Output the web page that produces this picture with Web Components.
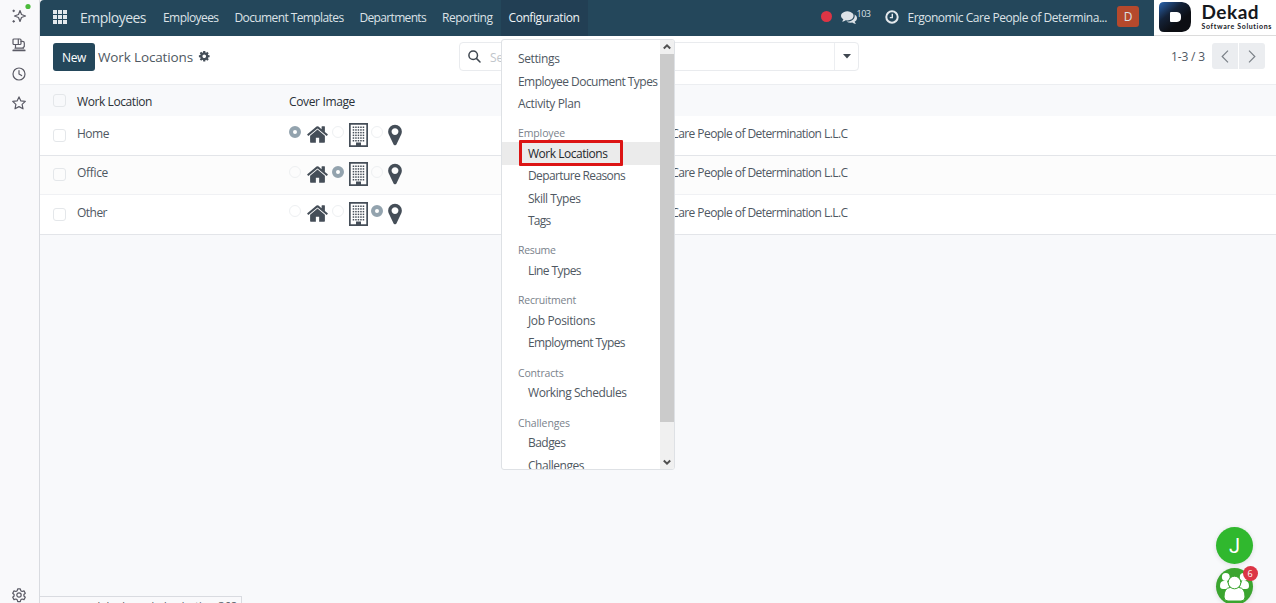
<!DOCTYPE html>
<html lang="en">
<head>
<meta charset="utf-8">
<title>Work Locations</title>
<style>
  html, body {
    margin: 0;
    height: 100%;
    overflow: hidden;
  }

  body {
    font-family: "Open Sans", "Noto Sans", sans-serif;
    font-size: 12px;
    color: #4f5862;
    background: #f8f9fb;
  }
</style>
</head>
<body>
<work-locations-page></work-locations-page>

<script>
const ICONS = {
  home: '<path d="M1472 992v480q0 26-19 45t-45 19h-384v-384h-256v384h-384q-26 0-45-19t-19-45v-480q0-1 .5-3t.5-3l575-474 575 474q1 2 1 6zm223-69l-62 74q-8 9-21 11h-3q-13 0-21-7l-692-577-692 577q-12 8-24 7-13-2-21-11l-62-74q-8-10-7-23.5t11-21.5l719-599q32-26 76-26t76 26l244 204v-195q0-14 9-23t23-9h192q14 0 23 9t9 23v408l219 182q10 8 11 21.5t-7 23.5z"/>',
  marker: '<path d="M1152 640q0-106-75-181t-181-75-181 75-75 181 75 181 181 75 181-75 75-181zm256 0q0 109-33 179l-364 774q-16 33-47.5 52t-67.5 19-67.5-19-46.5-52l-365-774q-33-70-33-179 0-212 150-362t362-150 362 150 150 362z"/>',
  cog: '<path d="M1152 896q0-106-75-181t-181-75-181 75-75 181 75 181 181 75 181-75 75-181zm512-109v222q0 12-8 23t-20 13l-185 28q-19 54-39 91 35 50 107 138 10 12 10 25t-9 23q-27 37-99 108t-94 71q-12 0-26-9l-138-108q-44 23-91 38-16 136-29 186-7 28-36 28h-222q-14 0-24.5-8.5t-11.5-21.5l-28-184q-49-16-90-37l-141 107q-10 9-25 9-14 0-25-11-126-114-165-168-7-10-7-23 0-12 8-23 15-21 51-66.5t54-70.5q-27-50-41-99l-183-27q-13-2-21-12.5t-8-23.5v-222q0-12 8-23t19-13l186-28q14-46 39-92-40-57-107-138-10-12-10-24 0-10 9-23 26-36 98.5-107.5t94.5-71.5q13 0 26 10l138 107q44-23 91-38 16-136 29-186 7-28 36-28h222q14 0 24.5 8.5t11.5 21.5l28 184q49 16 90 37l142-107q9-9 24-9 13 0 25 10 129 119 165 170 7 8 7 22 0 12-8 23-15 21-51 66.5t-54 70.5q26 50 41 98l183 28q13 2 21 12.5t8 23.5z"/>',
  comments: '<path d="M1408 768q0 139-94 257t-256.5 186.5-353.5 68.5q-86 0-176-16-124 88-278 128-36 9-86 16h-3q-11 0-20.5-8t-11.5-21q-1-3-1-6.5t.5-6.5 2-6l2.5-5 3.5-5.5 4-5 4.5-5 4-4.5q5-6 23-25t26-29.5 22.5-29 25-38.5 20.5-44q-124-72-195-177t-71-224q0-139 94-257t256.5-186.5 353.5-68.5 353.5 68.5 256.5 186.5 94 257zm384 256q0 120-71 224.5t-195 176.5q10 24 20.5 44t25 38.5 22.5 29 26 29.5 23 25q1 1 4 4.5t4.5 5 4 5 3.5 5.5l2.5 5 2 6 .5 6.5-1 6.5q-3 14-13 22t-22 7q-50-7-86-16-154-40-278-128-90 16-176 16-271 0-472-132 58 4 88 4 161 0 309-45t264-129q125-92 192-212t67-254q0-77-23-152 129 71 204 178t75 230z"/>'
}

// Single line of text, spaced out to the given width
class TextLabel extends HTMLElement {
  constructor () {
    super()
    this.shadow = this.attachShadow({ mode: 'open' })
  }

  connectedCallback () {
    this.shadow.innerHTML =
      /* html */`
      <style>
        :host{
          display: inline-block;
          white-space: nowrap;
        }
      </style>
      <slot></slot>
    `
    const width = Number(this.getAttribute('w'))
    if (width) {
      const natural = this.getBoundingClientRect().width
      this.style.letterSpacing = `${(width - natural) / this.textContent.length}px`
    }
  }
}

class FaIcon extends HTMLElement {
  constructor () {
    super()
    this.shadow = this.attachShadow({ mode: 'open' })
  }

  connectedCallback () {
    const size = this.getAttribute('size')
    this.shadow.innerHTML =
      /* html */`
      <style>
        :host{
          display: block;
          flex: none;
        }

        svg{
          display: block;
          fill: currentColor;
        }
      </style>
      <svg width="${size}" height="${size}" viewBox="0 0 1792 1792">${ICONS[this.getAttribute('name')]}</svg>
    `
  }
}

class SideRail extends HTMLElement {
  constructor () {
    super()
    this.shadow = this.attachShadow({ mode: 'open' })
  }

  connectedCallback () {
    this.shadow.innerHTML =
      /* html */`
      <style>
        :host{
          display: flex;
          flex-direction: column;
          align-items: center;
          box-sizing: border-box;
          width: 40px;
          padding: 8px 2px 0 0;
          gap: 13.100px;
          background: #f9f9fb;
          border-right: 1px solid #d9dbe0;
        }

        svg{
          display: block;
          flex: none;
          overflow: visible;
          fill: none;
          stroke: #5b5b66;
          stroke-width: 1.2;
          stroke-linejoin: round;
          stroke-linecap: round;
        }

        .settings{
          margin-top: auto;
        }
      </style>

      <svg width="16" height="16" viewBox="0 0 16 16">
        <path d="M9 2.500L10.500 6.500L14.500 8L10.500 9.500L9 13.500L7.500 9.500L3.500 8L7.500 6.500Z"/>
        <path d="M2.700 2v1.600M1.900 2.800h1.600M2.700 12.500v1.600M1.900 13.300h1.600"/>
        <circle cx="17" cy="-1.500" r="2.600" fill="#4cbb3c" stroke="none"/>
      </svg>
      <svg width="16" height="16" viewBox="0 0 16 16">
        <rect x="2" y="2" width="8" height="5.500" rx="1"/>
        <path d="M7.300 2.400v4.700M4.500 7.800v3.200M4 11.200h8.500M10 4.300h1.500q1.800 0 1.800 1.800v3.400l-1.500 1.500"/>
        <path d="M2.300 13.400h11.400" stroke-width="1.800"/>
      </svg>
      <svg width="16" height="16" viewBox="0 0 16 16">
        <circle cx="8" cy="8" r="6"/>
        <path d="M8 4.500V8l2.600 1.600"/>
      </svg>
      <svg width="16" height="16" viewBox="0 0 16 16">
        <path d="M8 1.900L9.900 5.900L14.300 6.400L11.100 9.400L12 13.800L8 11.600L4 13.800L4.900 9.400L1.700 6.400L6.100 5.900Z"/>
      </svg>
      <svg class="settings" width="16" height="16" viewBox="0 0 16 16">
        <circle cx="8" cy="8" r="2.200"/>
        <path d="M6.700 1.800h2.600l.5 1.900 1.300.8 1.900-.6 1.300 2.300-1.400 1.300v1.500l1.400 1.300-1.300 2.300-1.900-.6-1.300.8-.5 1.900H6.700l-.5-1.900-1.300-.8-1.900.6-1.300-2.300L3.100 9V7.500L1.700 6.200 3 3.900l1.900.6 1.300-.8z"/>
      </svg>
    `
  }
}

class NavBar extends HTMLElement {
  constructor () {
    super()
    this.shadow = this.attachShadow({ mode: 'open' })
  }

  connectedCallback () {
    this.shadow.innerHTML =
      /* html */`
      <style>
        :host{
          display: flex;
          height: 36px;
          color: #dce2e7;
        }

        .bar{
          flex: 1;
          display: flex;
          align-items: center;
          background: #24475b;
          border-radius: 4px 0 0 0;
          padding: 0 15px 2px 13px;
          box-sizing: border-box;
        }

        .apps{
          display: grid;
          grid-template-columns: repeat(3, 4px);
          gap: 1px;
          margin: -1px 13px 0 0;
        }

        .apps i{
          height: 4px;
          background: #e3e8ec;
        }

        .brand{
          font-size: 14px;
          margin-right: 17px;
        }

        nav{
          display: flex;
          align-self: stretch;
          margin-bottom: -2px;
        }

        nav a{
          display: flex;
          align-items: center;
          padding: 0 8px 2px;
        }

        nav a:first-child{
          padding-left: 0;
        }

        nav a.active{
          background: #223f54;
          color: #f1f4f6;
        }

        .systray{
          display: flex;
          align-items: center;
          margin-left: auto;
        }

        .dot{
          width: 11px;
          height: 11px;
          border-radius: 50%;
          background: #dc3545;
          margin: -1px 9px 0 0;
        }

        .count{
          font-size: 9px;
          margin: -8px 14px 0 0;
        }

        .clock{
          display: block;
          margin: -1px 9px 0 0;
        }

        .avatar{
          display: grid;
          place-items: center;
          width: 22px;
          height: 21px;
          margin: 0 0 1px 10px;
          border-radius: 3px;
          background: #b5492c;
        }

        .logo{
          display: flex;
          align-items: center;
          box-sizing: border-box;
          width: 122px;
          padding: 0 0 1px 4.500px;
          background: #fff;
          border-bottom: 1px solid #dcdcdc;
          color: #15181d;
          font-family: Lato, sans-serif;
          font-weight: 700;
        }

        .words{
          display: flex;
          flex-direction: column;
          margin: -1px 0 0 11px;
        }

        .name{
          font-size: 19px;
          line-height: 19px;
        }

        .tag{
          font-size: 7px;
          line-height: 10px;
        }
      </style>

      <div class="bar">
        <div class="apps"><i></i><i></i><i></i><i></i><i></i><i></i><i></i><i></i><i></i></div>
        <text-label class="brand" w="66">Employees</text-label>
        <nav>
          <a><text-label w="55.500">Employees</text-label></a>
          <a><text-label w="109">Document Templates</text-label></a>
          <a><text-label w="66.500">Departments</text-label></a>
          <a><text-label w="50.500">Reporting</text-label></a>
          <a class="active"><text-label w="71">Configuration</text-label></a>
        </nav>
        <div class="systray">
          <div class="dot"></div>
          <fa-icon name="comments" size="16"></fa-icon>
          <text-label class="count" w="14">103</text-label>
          <svg class="clock" width="14" height="14" viewBox="0 0 14 14" fill="none" stroke="#e3e8ec">
            <circle cx="7" cy="7" r="5.700" stroke-width="2"/>
            <path d="M7.300 3.800v3.800H4.800" stroke-width="1.400"/>
          </svg>
          <text-label w="199.500">Ergonomic Care People of Determina...</text-label>
          <div class="avatar">D</div>
        </div>
      </div>
      <div class="logo">
        <svg width="32" height="30" viewBox="0 0 32 30">
          <defs>
            <linearGradient id="g" x1="0" y1="0" x2=".6" y2=".7">
              <stop offset="0" stop-color="#2a65b0"/>
              <stop offset=".55" stop-color="#142238"/>
              <stop offset="1" stop-color="#0c0e13"/>
            </linearGradient>
          </defs>
          <path fill="url(#g)" d="M5 0H23Q32 1 32 10V20Q32 29 23 30H5Q0 30 0 25V5Q0 0 5 0Z"/>
          <path fill="#fff" d="M12 10H18Q22 10.500 22 14V16Q22 19.500 18 20H12Q11 20 11 19V11Q11 10 12 10Z"/>
        </svg>
        <div class="words">
          <text-label class="name" w="61.500">Dekad</text-label>
          <text-label class="tag" w="70.500">Software Solutions</text-label>
        </div>
      </div>
    `
  }
}

class ControlPanel extends HTMLElement {
  constructor () {
    super()
    this.shadow = this.attachShadow({ mode: 'open' })
  }

  connectedCallback () {
    this.shadow.innerHTML =
      /* html */`
      <style>
        :host{
          display: grid;
          grid-template-columns: 419px 400px 1fr;
          align-items: center;
          box-sizing: border-box;
          height: 49px;
          padding: 0 11px 7px 0;
          background: #fff;
          border-bottom: 1px solid #eceef1;
        }

        .left{
          display: flex;
          align-items: center;
          padding-left: 13px;
        }

        .new{
          display: grid;
          place-items: center;
          box-sizing: border-box;
          width: 42px;
          height: 28px;
          padding-top: 1px;
          margin-right: 3px;
          border-radius: 3px;
          background: #24475b;
          color: #fff;
        }

        .title{
          font-size: 13.500px;
          margin-right: 5px;
        }

        .left fa-icon{
          color: #454e58;
        }

        .search{
          display: flex;
          align-items: center;
          box-sizing: border-box;
          height: 29px;
          border: 1px solid #e9ebee;
          border-radius: 4px;
          padding-left: 8px;
          color: #c0c5cb;
        }

        .search text-label{
          margin: 2px 0 0 9px;
        }

        .toggle{
          display: grid;
          place-items: center;
          align-self: stretch;
          width: 23px;
          margin-left: auto;
          border-left: 1px solid #eceef1;
        }

        .pager{
          display: flex;
          align-items: center;
          justify-content: flex-end;
          gap: 1px;
          margin-top: -1px;
        }

        .pager text-label{
          margin-right: 6px;
        }

        .pager div{
          display: grid;
          place-items: center;
          width: 26px;
          height: 26px;
          background: #ebedf0;
        }

        .pager svg, .toggle svg, .search svg{
          display: block;
        }

        .pager .prev{
          border-radius: 3px 0 0 3px;
        }

        .pager .next{
          border-radius: 0 3px 3px 0;
        }
      </style>

      <div class="left">
        <div class="new"><text-label w="24">New</text-label></div>
        <text-label class="title" w="95">Work Locations</text-label>
        <fa-icon name="cog" size="12.500"></fa-icon>
      </div>
      <div class="search">
        <svg width="13" height="13" viewBox="0 0 13 13" fill="none" stroke="#3f4750" stroke-width="1.500" stroke-linecap="round">
          <circle cx="5.200" cy="5.200" r="4.300"/>
          <path d="M8.400 8.400l3.600 3.600"/>
        </svg>
        <text-label w="46">Search...</text-label>
        <div class="toggle">
          <svg width="8" height="5" viewBox="0 0 8 5"><path d="M0 0h8L4 4.500z" fill="#3f4750"/></svg>
        </div>
      </div>
      <div class="pager">
        <text-label w="34">1-3 / 3</text-label>
        <div class="prev"><svg width="8" height="13" viewBox="0 0 8 13" fill="none" stroke="#7a8087" stroke-width="1.200"><path d="M7 .7L1.200 6.500L7 12.300"/></svg></div>
        <div class="next"><svg width="8" height="13" viewBox="0 0 8 13" fill="none" stroke="#7a8087" stroke-width="1.200"><path d="M1 .7l5.800 5.800L1 12.300"/></svg></div>
      </div>
    `
  }
}

class CoverPicker extends HTMLElement {
  constructor () {
    super()
    this.shadow = this.attachShadow({ mode: 'open' })
  }

  windows () {
    let rects = ''
    for (let y = 0; y < 6; y++) {
      for (let x = 0; x < 5; x++) {
        rects += `<rect x="${3.7 + x * 2.5}" y="${3.5 + y * 2.7}" width="1.500" height="1.500"/>`
      }
    }
    return rects
  }

  connectedCallback () {
    const value = this.getAttribute('value')
    const radio = name => `<i class="${value === name ? 'on' : ''}"></i>`
    this.shadow.innerHTML =
      /* html */`
      <style>
        :host{
          display: flex;
          align-items: center;
          margin-top: -1px;
          color: #454e58;
        }

        i{
          box-sizing: border-box;
          flex: none;
          width: 12px;
          height: 12px;
          margin-bottom: 5px;
          border: 1px solid #eef0f2;
          border-radius: 50%;
        }

        i.on{
          border: 4px solid #93a3ae;
          background: #fff;
        }

        .house{
          margin: 0 2.500px 0 5px;
        }

        .building{
          display: block;
          fill: currentColor;
          margin: 0 2.500px 0 5.500px;
        }
      </style>

      ${radio('home')}
      <fa-icon class="house" name="home" size="23"></fa-icon>
      ${radio('office')}
      <svg class="building" width="19" height="24" viewBox="0 0 19 24">
        <path fill-rule="evenodd" d="M0 0h19v24H0zM1.700 1.700v20.600h15.600v-20.600z"/>
        ${this.windows()}
        <path d="M7 19.500h5V24H7z"/>
      </svg>
      ${radio('other')}
      <fa-icon name="marker" size="24"></fa-icon>
    `
  }
}

class LocationTable extends HTMLElement {
  constructor () {
    super()
    this.shadow = this.attachShadow({ mode: 'open' })
    this.rows = [
      ['Home', 32, 'home'],
      ['Office', 31, 'office'],
      ['Other', 30, 'other']
    ]
  }

  row ([name, width, value]) {
    return /* html */`
      <div class="row">
        <b></b>
        <text-label w="${width}">${name}</text-label>
        <cover-picker value="${value}"></cover-picker>
        <text-label w="233.500">Ergonomic Care People of Determination L.L.C</text-label>
      </div>
    `
  }

  connectedCallback () {
    this.shadow.innerHTML =
      /* html */`
      <style>
        :host{
          display: block;
        }

        .head, .row{
          display: grid;
          grid-template-columns: 24px 212px 325px 1fr;
          align-items: center;
          justify-items: start;
          box-sizing: border-box;
          padding-left: 13px;
        }

        .head{
          height: 31px;
          color: #2b3138;
          background: #f8f9fb;
        }

        .head text-label{
          margin-top: 1px;
        }

        .row{
          height: 39.500px;
          background: #fff;
          border-bottom: 1px solid #e3e5e9;
        }

        .row:nth-of-type(odd){
          background: #fcfcfc;
          border-color: #f0f1f4;
        }

        .row text-label{
          margin-bottom: 4.300px;
        }

        b{
          box-sizing: border-box;
          width: 13px;
          height: 13px;
          border: 1px solid #e4e7ea;
          border-radius: 3px;
        }
      </style>

      <div class="head">
        <b></b>
        <text-label w="75">Work Location</text-label>
        <text-label w="66">Cover Image</text-label>
      </div>
      ${this.rows.map(this.row).join('')}
    `
  }
}

class ConfigMenu extends HTMLElement {
  constructor () {
    super()
    this.shadow = this.attachShadow({ mode: 'open' })
  }

  connectedCallback () {
    this.shadow.innerHTML =
      /* html */`
      <style>
        :host{
          display: flex;
          box-sizing: border-box;
          width: 174px;
          height: 431px;
          overflow: hidden;
          background: #fff;
          border: 1px solid #dee1e5;
          border-radius: 3px;
        }

        .list{
          flex: 1;
          padding-top: 7.800px;
          min-width: 0;
        }

        .item, .sub{
          display: flex;
          align-items: center;
          height: 22.350px;
          padding-left: 16px;
        }

        .sub{
          padding-left: 26px;
        }

        .group{
          height: 18px;
          line-height: 18px;
          padding: 9.600px 0 0 16px;
          font-size: 10.500px;
          color: #7a828b;
        }

        .selected{
          background: #ebebeb;
          color: #24282d;
        }

        .mark{
          box-sizing: border-box;
          display: flex;
          align-items: center;
          flex: none;
          width: 104px;
          height: 26px;
          margin: -2px 0 0 -9px;
          padding: 1px 0 0 6px;
          border: 3px solid #dc1414;
          border-radius: 1px;
        }

        .scroll{
          display: flex;
          flex-direction: column;
          width: 14px;
          background: #f0f0f0;
        }

        .scroll svg{
          display: block;
          flex: none;
          fill: none;
          stroke: #505050;
          stroke-width: 2;
        }

        .thumb{
          height: 368px;
          margin-bottom: auto;
          background: #cbcbcb;
        }
      </style>

      <div class="list">
        <div class="item"><text-label w="41.500">Settings</text-label></div>
        <div class="item"><text-label w="139.500">Employee Document Types</text-label></div>
        <div class="item"><text-label w="62.500">Activity Plan</text-label></div>
        <div class="group"><text-label w="47">Employee</text-label></div>
        <div class="sub selected"><div class="mark"><text-label w="79.500">Work Locations</text-label></div></div>
        <div class="sub"><text-label w="97">Departure Reasons</text-label></div>
        <div class="sub"><text-label w="52.500">Skill Types</text-label></div>
        <div class="sub"><text-label w="22.500">Tags</text-label></div>
        <div class="group"><text-label w="37.500">Resume</text-label></div>
        <div class="sub"><text-label w="53">Line Types</text-label></div>
        <div class="group"><text-label w="58">Recruitment</text-label></div>
        <div class="sub"><text-label w="67">Job Positions</text-label></div>
        <div class="sub"><text-label w="97">Employment Types</text-label></div>
        <div class="group"><text-label w="45.500">Contracts</text-label></div>
        <div class="sub"><text-label w="98.500">Working Schedules</text-label></div>
        <div class="group"><text-label w="52">Challenges</text-label></div>
        <div class="sub"><text-label w="37.500">Badges</text-label></div>
        <div class="sub"><text-label w="56">Challenges</text-label></div>
      </div>
      <div class="scroll">
        <svg width="14" height="14" viewBox="0 0 14 14"><path d="M3.800 8.500L7 5.300L10.200 8.500"/></svg>
        <div class="thumb"></div>
        <svg width="14" height="14" viewBox="0 0 14 14"><path d="M3.800 5.500L7 8.700L10.200 5.500"/></svg>
      </div>
    `
  }
}

class ChatHeads extends HTMLElement {
  constructor () {
    super()
    this.shadow = this.attachShadow({ mode: 'open' })
  }

  connectedCallback () {
    this.shadow.innerHTML =
      /* html */`
      <style>
        :host{
          display: flex;
          flex-direction: column;
          gap: 4px;
        }

        .bubble{
          position: relative;
          display: grid;
          place-items: center;
          width: 37px;
          height: 37px;
          border-radius: 50%;
          background: #30b82e;
          color: #fff;
          font-family: Roboto, sans-serif;
          font-size: 20px;
          box-shadow: 0 1px 5px rgba(0, 0, 0, .12);
        }

        .group{
          background: #3ba52f;
        }

        .badge{
          position: absolute;
          top: -2.500px;
          right: -4.500px;
          display: grid;
          place-items: center;
          width: 15px;
          height: 15px;
          border-radius: 50%;
          background: #dc3545;
          font-family: "Open Sans", sans-serif;
          font-size: 9px;
        }
      </style>

      <div class="bubble">J</div>
      <div class="bubble group">
        <svg width="37" height="37" viewBox="0 0 37 37" fill="#fff">
          <circle cx="9.800" cy="9" r="3.900"/>
          <circle cx="27.700" cy="9" r="3.900"/>
          <path d="M4 18q0-5 4-5h3l3 8H7q-3 0-3-3zM33 18q0-5-4-5h-3l-3 8h7q3 0 3-3z"/>
          <path d="M8 29q0-9 6-9.500h9q6 .5 6 9.500 0 4-4 4H12q-4 0-4-4z" stroke="#3ba52f" stroke-width="1"/>
          <circle cx="18.500" cy="14.500" r="6.300" stroke="#3ba52f" stroke-width="1"/>
        </svg>
        <span class="badge">6</span>
      </div>
    `
  }
}

class WorkLocationsPage extends HTMLElement {
  constructor () {
    super()
    this.shadow = this.attachShadow({ mode: 'open' })
  }

  connectedCallback () {
    this.shadow.innerHTML =
      /* html */`
      <style>
        :host{
          display: flex;
          position: relative;
          height: 603px;
          overflow: hidden;
        }

        main{
          flex: 1;
          display: flex;
          flex-direction: column;
          min-width: 0;
        }

        config-menu{
          position: absolute;
          left: 501px;
          top: 39px;
        }

        chat-heads{
          position: absolute;
          left: 1216px;
          top: 527px;
        }

        .status{
          position: absolute;
          left: 39px;
          top: 596px;
          box-sizing: border-box;
          width: 203px;
          height: 20px;
          padding: 1px 0 0 6px;
          border: 1px solid #d9dbe0;
          background: #f9f9fb;
          font-size: 11px;
          line-height: 15px;
        }
      </style>

      <side-rail></side-rail>
      <main>
        <nav-bar></nav-bar>
        <control-panel></control-panel>
        <location-table></location-table>
      </main>
      <config-menu></config-menu>
      <chat-heads></chat-heads>
      <div class="status"><text-label w="191">ergocare.dekad.com/odoo/action-368</text-label></div>
    `
  }
}

customElements.define('text-label', TextLabel)
customElements.define('fa-icon', FaIcon)
customElements.define('side-rail', SideRail)
customElements.define('nav-bar', NavBar)
customElements.define('control-panel', ControlPanel)
customElements.define('cover-picker', CoverPicker)
customElements.define('location-table', LocationTable)
customElements.define('config-menu', ConfigMenu)
customElements.define('chat-heads', ChatHeads)
customElements.define('work-locations-page', WorkLocationsPage)
</script>
</body>
</html>
